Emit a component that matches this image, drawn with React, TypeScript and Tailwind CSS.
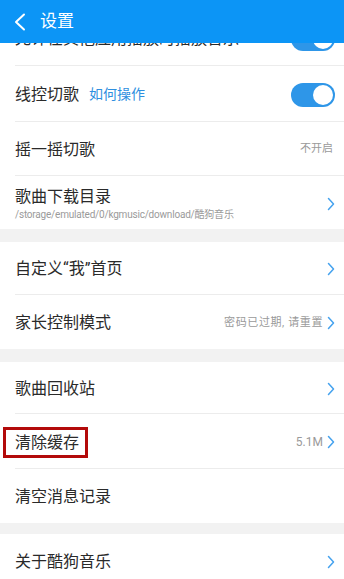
const font = { fontFamily: 'Roboto, "Noto Sans CJK SC", sans-serif' };

function Chevron() {
  return (
    <svg width="8" height="14" viewBox="0 0 8 14" className="shrink-0 ml-[4px]">
      <polyline points="1.5,1.5 6.5,7 1.5,12.5" fill="none" stroke="#45a2ee" strokeWidth="1.5" strokeLinecap="round" strokeLinejoin="round" />
    </svg>
  );
}

function Toggle() {
  return (
    <div className="w-[44px] h-[24px] rounded-full bg-[#2e96e8] flex items-center justify-end px-[2px] shrink-0">
      <div className="w-[20px] h-[20px] rounded-full bg-white" />
    </div>
  );
}

function Row({ h, last, children }: { h: string; last?: boolean; children: React.ReactNode }) {
  return (
    <div className={`ml-[15px] pr-[9px] pt-[2px] flex items-center ${h} ${last ? '' : 'border-b border-[#ececec]'}`}>
      {children}
    </div>
  );
}

function Gap({ h }: { h: string }) {
  return <div className={`${h} bg-[#f2f2f2]`} />;
}

export default function App() {
  return (
    <div className="w-[344px] h-[579px] overflow-hidden bg-white text-[#2a2a2a]" style={font}>
      <div className="h-[43px] bg-[#0c95f6] flex items-center relative z-10">
        <svg width="14" height="18" viewBox="0 0 14 18" className="ml-[13px]">
          <polyline points="11,1.5 3,9 11,16.5" fill="none" stroke="white" strokeWidth="2" strokeLinecap="round" strokeLinejoin="round" />
        </svg>
        <span className="ml-[13px] text-white text-[17px] leading-none">设置</span>
      </div>

      <div className="h-[23px] overflow-hidden">
        <div className="-mt-[31px] ml-[15px] pr-[9px] h-[54px] flex items-center border-b border-[#ececec]">
          <span className="text-[16px] flex-1">允许在其他应用播放时播放音乐</span>
          <Toggle />
        </div>
      </div>

      <Row h="h-[56px]">
        <span className="text-[16px]">线控切歌</span>
        <span className="text-[14px] text-[#2e8fe0] ml-[10px] flex-1">如何操作</span>
        <Toggle />
      </Row>
      <Row h="h-[54px]">
        <span className="text-[16px] flex-1">摇一摇切歌</span>
        <span className="text-[11px] text-[#9a9a9a] mr-[2px]">不开启</span>
      </Row>
      <Row h="h-[53px]" last>
        <div className="flex-1 flex flex-col">
          <span className="text-[16px] leading-[22px]">歌曲下载目录</span>
          <span className="text-[10px] leading-[14px] text-[#9a9a9a] tracking-[-0.2px]">/storage/emulated/0/kgmusic/download/酷狗音乐</span>
        </div>
        <Chevron />
      </Row>

      <Gap h="h-[13px]" />

      <Row h="h-[53px]">
        <span className="text-[16px] flex-1">自定义“我”首页</span>
        <Chevron />
      </Row>
      <Row h="h-[54px]" last>
        <span className="text-[16px] flex-1">家长控制模式</span>
        <span className="text-[11px] text-[#9a9a9a] tracking-[0.6px]">密码已过期, 请重置</span>
        <Chevron />
      </Row>

      <Gap h="h-[13px]" />

      <Row h="h-[52px]">
        <span className="text-[16px] flex-1">歌曲回收站</span>
        <Chevron />
      </Row>
      <Row h="h-[55px]">
        <div className="flex-1">
          <span className="inline-block -ml-[12px] border-[3px] border-[#b30a0a] pl-[9px] pr-[6px] text-[16px] leading-[25px]">清除缓存</span>
        </div>
        <span className="text-[12px] text-[#9a9a9a]">5.1M</span>
        <Chevron />
      </Row>
      <Row h="h-[54px]" last>
        <span className="text-[16px] flex-1">清空消息记录</span>
      </Row>

      <Gap h="h-[11px]" />

      <Row h="h-[54px]" last>
        <span className="text-[16px] flex-1">关于酷狗音乐</span>
        <Chevron />
      </Row>
    </div>
  );
}
